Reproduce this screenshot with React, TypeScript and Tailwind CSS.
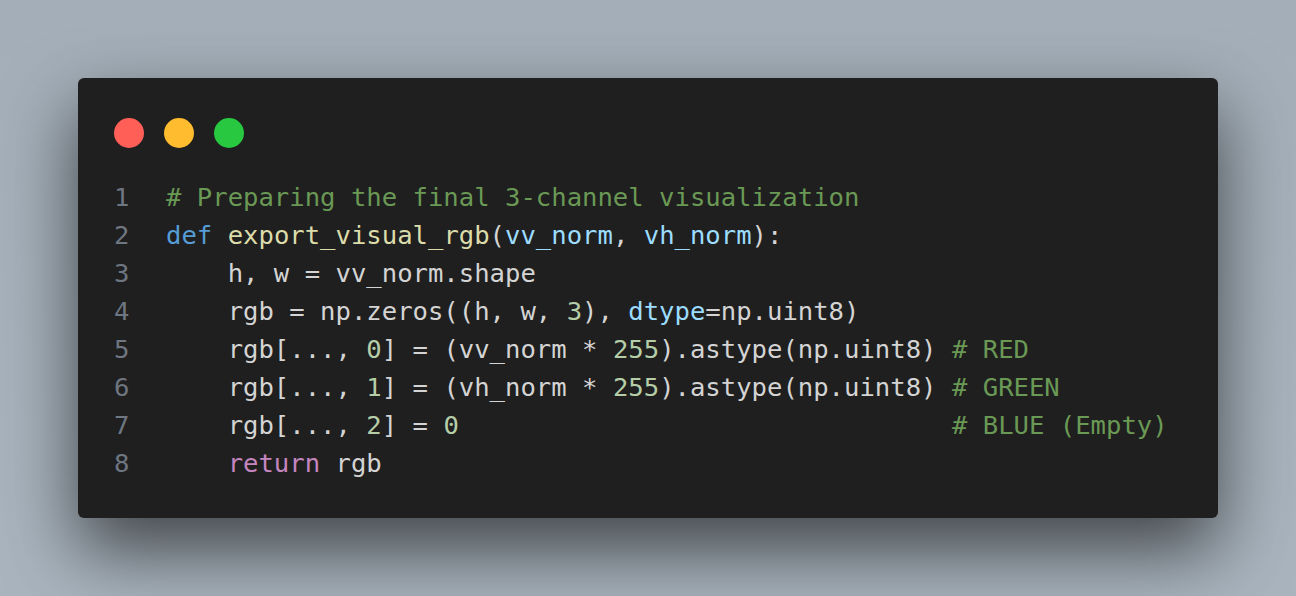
const C = {
  text: "text-[#d4d4d4]",
  com: "text-[#6a9955]",
  kw: "text-[#569cd6]",
  fn: "text-[#dcdcaa]",
  param: "text-[#9cdcfe]",
  num: "text-[#b5cea8]",
  ret: "text-[#c586c0]",
}

type Tok = [string, string?]

const lines: Tok[][] = [
  [["# Preparing the final 3-channel visualization", C.com]],
  [
    ["def", C.kw],
    [" "],
    ["export_visual_rgb", C.fn],
    ["("],
    ["vv_norm", C.param],
    [", "],
    ["vh_norm", C.param],
    ["):"],
  ],
  [["    h, w = vv_norm.shape"]],
  [
    ["    rgb = np.zeros((h, w, "],
    ["3", C.num],
    ["), "],
    ["dtype", C.param],
    ["=np.uint8)"],
  ],
  [
    ["    rgb[..., "],
    ["0", C.num],
    ["] = (vv_norm * "],
    ["255", C.num],
    [").astype(np.uint8) "],
    ["# RED", C.com],
  ],
  [
    ["    rgb[..., "],
    ["1", C.num],
    ["] = (vh_norm * "],
    ["255", C.num],
    [").astype(np.uint8) "],
    ["# GREEN", C.com],
  ],
  [
    ["    rgb[..., "],
    ["2", C.num],
    ["] = "],
    ["0", C.num],
    ["                                "],
    ["# BLUE (Empty)", C.com],
  ],
  [["    "], ["return", C.ret], [" rgb"]],
]

export default function App() {
  return (
    <div className="flex h-[596px] w-full items-start justify-center bg-gradient-to-b from-[#a3aeb8] to-[#a9b4be] pt-[78px]">
      <div className="h-[440px] w-[1140px] rounded-md bg-[#1f1f1f] px-[36px] pt-[40px] shadow-[0_32px_72px_rgba(0,0,0,0.62)]">
        <div className="flex gap-[20px]">
          <span className="h-[30px] w-[30px] rounded-full bg-[#ff5f57]" />
          <span className="h-[30px] w-[30px] rounded-full bg-[#febc2e]" />
          <span className="h-[30px] w-[30px] rounded-full bg-[#28c840]" />
        </div>
        <div className="mt-[30px] font-['DejaVu_Sans_Mono',monospace] text-[25.6px] leading-[38px]">
          {lines.map((toks, i) => (
            <div key={i} className="flex whitespace-pre">
              <span className="w-[52px] shrink-0 text-[#6e7681]">{i + 1}</span>
              <span className={C.text}>
                {toks.map(([t, cls], j) => (
                  <span key={j} className={cls}>
                    {t}
                  </span>
                ))}
              </span>
            </div>
          ))}
        </div>
      </div>
    </div>
  )
}
